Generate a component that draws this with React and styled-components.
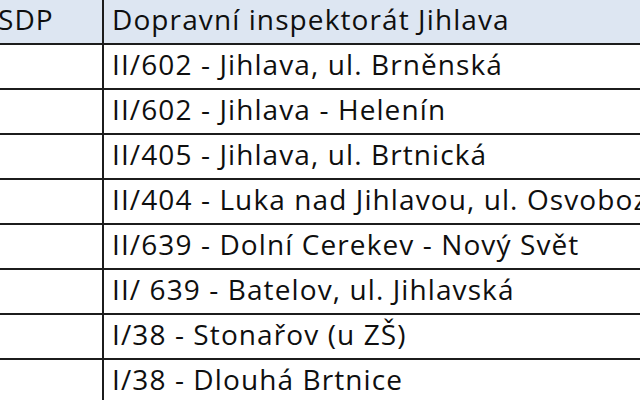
import React from "react";
import styled, { createGlobalStyle } from "styled-components";

const Global = createGlobalStyle`
  html, body { margin: 0; padding: 0; background: #ffffff; overflow: hidden; }
  body { font-family: "Open Sans", "Lato", sans-serif; }
`;

const Sheet = styled.div`
  width: 900px;
  margin-left: -60px;
  display: grid;
  grid-template-columns: 164px 1fr;
`;

const Cell = styled.div`
  box-sizing: border-box;
  height: 45px;
  padding: 0 0 0 8px;
  border-bottom: 2px solid #1c1c1c;
  border-right: ${(p) => (p.$first ? "2px solid #1c1c1c" : "none")};
  background: ${(p) => (p.$head ? "#dde6f2" : "#ffffff")};
  color: #0f0f0f;
  font-size: 28px;
  letter-spacing: 1.1px;
  line-height: 1;
  padding-top: 5px;
  white-space: nowrap;
  overflow: hidden;
`;

const FirstCell = styled(Cell)`
  padding-left: 58px;
`;

const rows = [
  "II/602 - Jihlava, ul. Brněnská",
  "II/602 - Jihlava - Helenín",
  "II/405 - Jihlava, ul. Brtnická",
  "II/404 - Luka nad Jihlavou, ul. Osvobození",
  "II/639 - Dolní Cerekev - Nový Svět",
  "II/ 639 - Batelov, ul. Jihlavská",
  "I/38 - Stonařov (u ZŠ)",
  "I/38 - Dlouhá Brtnice",
  "I/38 - Jihlava",
];

export default function App() {
  return (
    <>
      <Global />
      <Sheet>
        <FirstCell $first $head>SDP</FirstCell>
        <Cell $head>Dopravní inspektorát Jihlava</Cell>
        {rows.map((r) => (
          <React.Fragment key={r}>
            <FirstCell $first />
            <Cell>{r}</Cell>
          </React.Fragment>
        ))}
      </Sheet>
    </>
  );
}
